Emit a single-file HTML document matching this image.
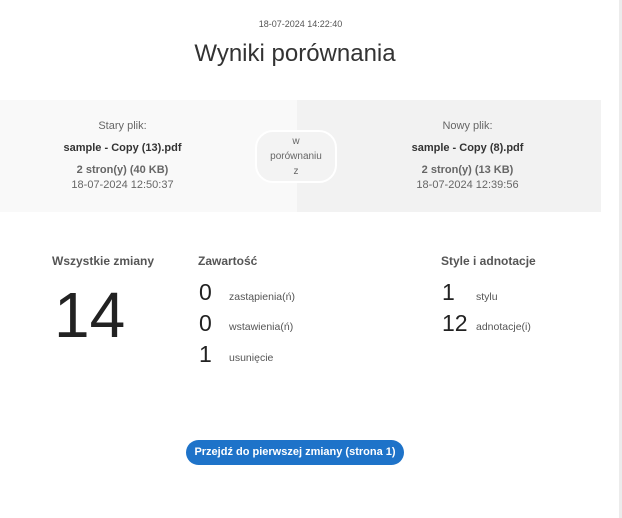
<!DOCTYPE html>
<html><head><meta charset="utf-8"><style>
*{margin:0;padding:0;box-sizing:border-box}
body{width:622px;height:518px;background:#fff;font-family:"Liberation Sans",Arial,sans-serif;position:relative;overflow:hidden;color:#333}
.a{position:absolute}
.c{text-align:center}
</style></head><body>
<div class="a" style="left:619px;top:0;width:3px;height:518px;background:#ececec"></div>
<div class="a c" style="left:0;width:601px;top:19px;font-size:9px;color:#555">18-07-2024 14:22:40</div>
<div class="a c" style="left:0;width:590px;top:40px;font-size:24px;color:#333">Wyniki porównania</div>
<div class="a" style="left:0;top:100px;width:297px;height:112px;background:#f9f9f9"></div>
<div class="a" style="left:297px;top:100px;width:304px;height:112px;background:#f2f2f2"></div>
<div class="a c" style="left:0;width:245px;top:119px;font-size:11px;line-height:15px;color:#666">Stary plik:<br><b style="color:#333;display:block;margin-top:7px">sample - Copy (13).pdf</b><b style="display:block;margin-top:7px">2 stron(y) (40 KB)</b>18-07-2024 12:50:37</div>
<div class="a c" style="left:345px;width:245px;top:119px;font-size:11px;line-height:15px;color:#666">Nowy plik:<br><b style="color:#333;display:block;margin-top:7px">sample - Copy (8).pdf</b><b style="display:block;margin-top:7px">2 stron(y) (13 KB)</b>18-07-2024 12:39:56</div>
<div class="a c" style="left:255px;top:130px;width:82px;height:53px;border:2px solid #fff;border-radius:18px;background:#f3f3f3;font-size:10px;line-height:15px;color:#666;padding-top:2px">w<br>porównaniu<br>z</div>
<div class="a" style="left:52px;top:254px;font-size:12px;font-weight:bold;color:#555">Wszystkie zmiany</div>
<div class="a" style="left:54px;top:280px;font-size:64px;color:#222;line-height:70px">14</div>
<div class="a" style="left:198px;top:254px;font-size:12px;font-weight:bold;color:#555">Zawartość</div>
<div class="a" style="left:441px;top:254px;font-size:12px;font-weight:bold;color:#555">Style i adnotacje</div>
<div class="a" style="left:199px;top:279px;font-size:23px;color:#222">0</div><div class="a" style="left:229px;top:291px;font-size:10.5px;color:#555">zastąpienia(ń)</div>
<div class="a" style="left:199px;top:310px;font-size:23px;color:#222">0</div><div class="a" style="left:229px;top:321px;font-size:10.5px;color:#555">wstawienia(ń)</div>
<div class="a" style="left:199px;top:341px;font-size:23px;color:#222">1</div><div class="a" style="left:229px;top:352px;font-size:10.5px;color:#555">usunięcie</div>
<div class="a" style="left:442px;top:279px;font-size:23px;color:#222">1</div><div class="a" style="left:476px;top:291px;font-size:10.5px;color:#555">stylu</div>
<div class="a" style="left:442px;top:310px;font-size:23px;color:#222">12</div><div class="a" style="left:476px;top:321px;font-size:10.5px;color:#555">adnotacje(i)</div>
<div class="a c" style="left:186px;top:440px;width:218px;height:25px;border-radius:13px;background:#1e73c9;color:#fff;font-size:11px;font-weight:bold;line-height:25px">Przejdź do pierwszej zmiany (strona 1)</div>
</body></html>
